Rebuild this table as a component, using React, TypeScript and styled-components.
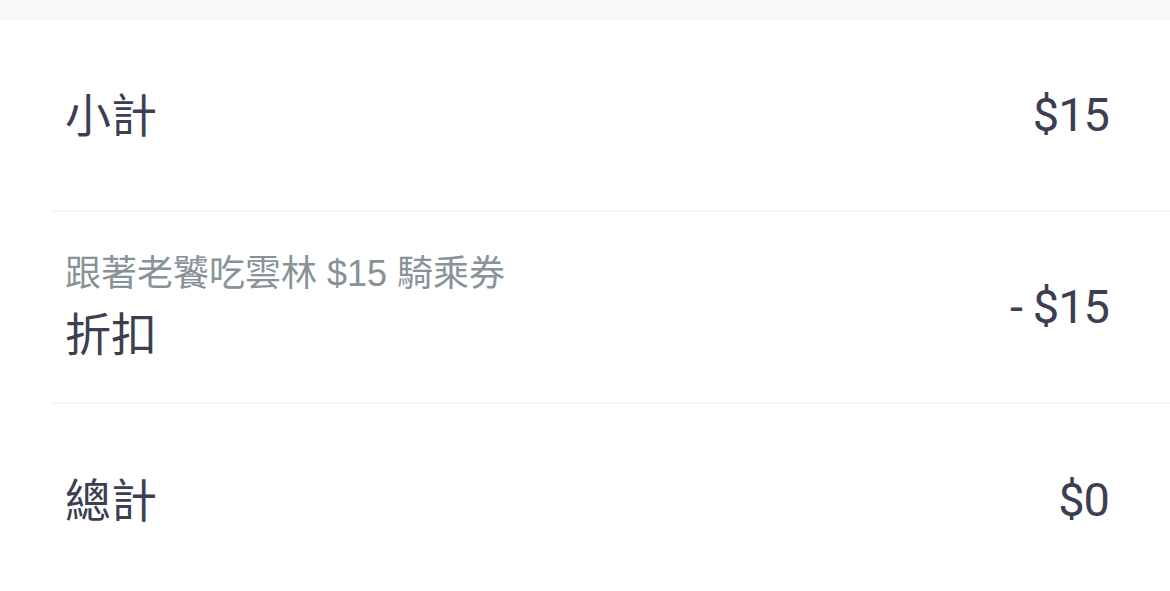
import React from "react";
import styled, { createGlobalStyle } from "styled-components";

const GlobalStyle = createGlobalStyle`
  html, body {
    margin: 0;
    padding: 0;
    background: #ffffff;
  }
  body {
    font-family: "Noto Sans CJK TC", "Noto Sans", sans-serif;
    color: #3b3f51;
  }
`;

type Line = {
  label: string;
  note?: string;
  amount: string;
};

const lines: Line[] = [
  { label: "小計", amount: "$15" },
  { label: "折扣", note: "跟著老饕吃雲林 $15 騎乘券", amount: "- $15" },
  { label: "總計", amount: "$0" },
];

export default function App() {
  return (
    <>
      <GlobalStyle />
      <Page>
        <TopBand />
        <Summary>
          {lines.map((line, i) => (
            <Row key={line.label} last={i === lines.length - 1}>
              <LabelBlock>
                {line.note && <Note>{line.note}</Note>}
                <Label>{line.label}</Label>
              </LabelBlock>
              <Amount>{line.amount}</Amount>
            </Row>
          ))}
        </Summary>
      </Page>
    </>
  );
}

const Page = styled.div`
  width: 1170px;
  height: 591px;
  overflow: hidden;
  background: #ffffff;
`;

const TopBand = styled.div`
  height: 20px;
  background-color: #f8f8f8;
`;

const Summary = styled.div`
  margin-left: 51px;
  display: flex;
  flex-direction: column;
`;

const Row = styled.div<{ last?: boolean }>`
  box-sizing: border-box;
  height: 192px;
  padding: 0 61px 0 14px;
  display: flex;
  align-items: center;
  justify-content: space-between;
  border-bottom: ${(p) => (p.last ? "none" : "2px solid #f5f5f5")};
`;

const LabelBlock = styled.div`
  display: flex;
  flex-direction: column;
  gap: 4px;
  margin-top: -3px;
`;

const Note = styled.div`
  font-family: "Liberation Sans", "Noto Sans CJK TC", sans-serif;
  font-size: 36px;
  line-height: 50px;
  color: #879396;
`;

const Label = styled.div`
  font-size: 46px;
  line-height: 60px;
  color: #3b3f51;
  transform: translateY(-2px);
`;

const Amount = styled.div`
  font-family: "Roboto", sans-serif;
  font-size: 47px;
  letter-spacing: -1px;
  line-height: 60px;
  color: #3b3f51;
`;
